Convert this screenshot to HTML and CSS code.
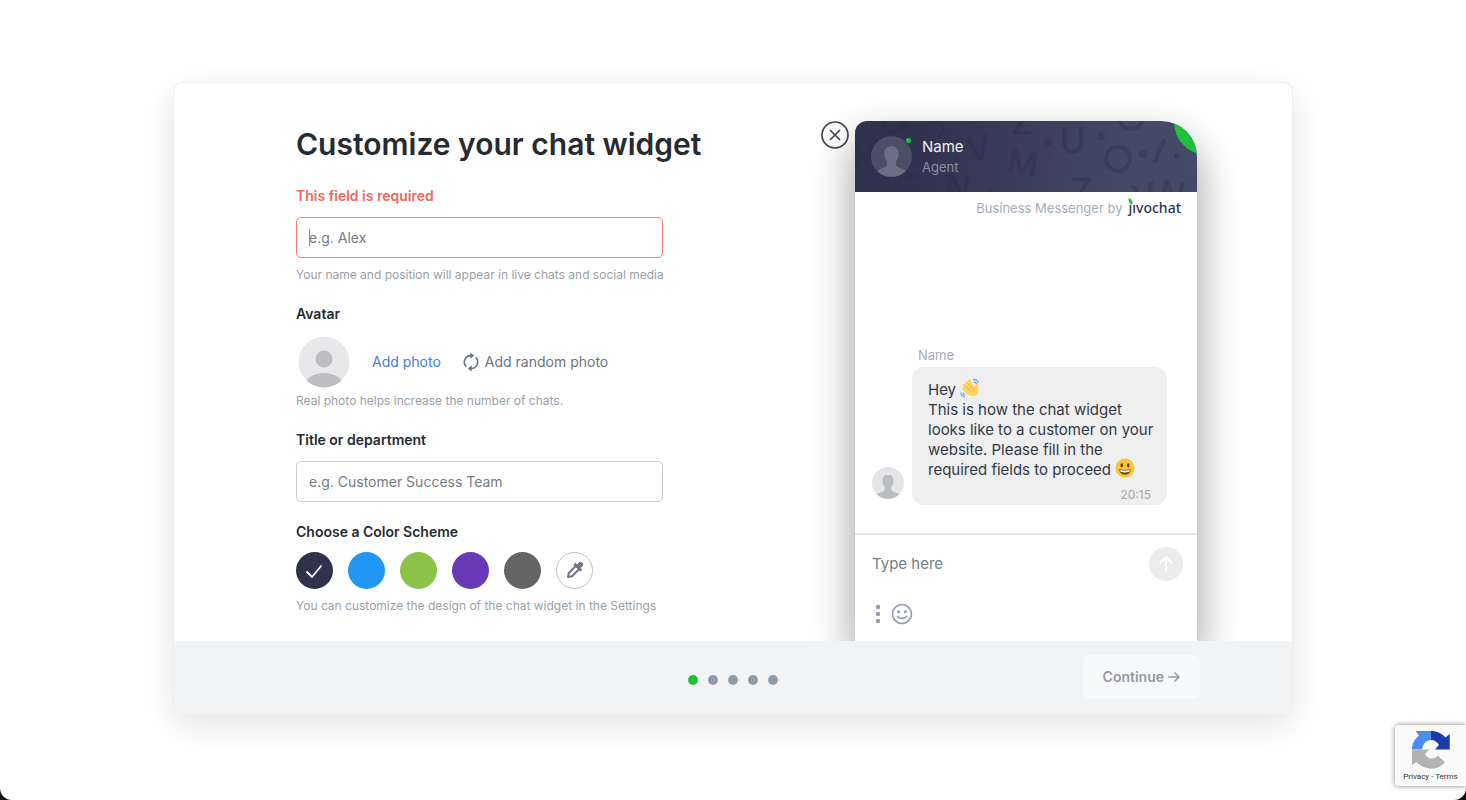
FILE: index.html
```html
<!DOCTYPE html>
<html lang="en">
<head>
    <meta charset="UTF-8">
    <meta name="viewport" content="width=device-width, initial-scale=1.0">
    <title>Customize your chat widget</title>
    <link rel="stylesheet" href="styles.css">
</head>
<body>
    <div class="page">
        <main class="card">
            <div class="card-body">
                <form class="form" id="widget-form">
                    <h1>Customize your chat widget</h1>

                    <div class="field">
                        <label class="label label-error" for="name">This field is required</label>
                        <div class="input-wrap">
                            <input class="input input-error" id="name" type="text" placeholder="e.g. Alex">
                            <span class="caret"></span>
                        </div>
                        <p class="hint">Your name and position will appear in live chats and social media</p>
                    </div>

                    <div class="field">
                        <h2 class="label">Avatar</h2>
                        <div class="avatar-row">
                            <svg class="avatar" viewBox="0 0 52 52" aria-hidden="true">
                                <clipPath id="avatar-clip"><circle cx="26" cy="26" r="25.5"/></clipPath>
                                <g clip-path="url(#avatar-clip)">
                                    <rect width="52" height="52" fill="#e8e8ea"/>
                                    <circle cx="26" cy="23" r="8.5" fill="#bdbec4"/>
                                    <ellipse cx="26" cy="49" rx="18.5" ry="12" fill="#bdbec4"/>
                                </g>
                            </svg>
                            <button class="link-btn link-blue" type="button">Add photo</button>
                            <button class="link-btn" type="button">
                                <svg width="16" height="20" viewBox="0 0 16 20" fill="none" stroke="#6b747d" stroke-width="1.7" aria-hidden="true">
                                    <path d="M3.3 14.7A6.5 6.5 0 0 1 8.6 3.6"/>
                                    <path d="M12.7 5.3A6.5 6.5 0 0 1 7.4 16.4"/>
                                    <path d="M7.3.4 11.2 3.6 7.3 6.8zM8.7 13.2 4.8 16.4l3.9 3.2z" fill="#6b747d" stroke="none"/>
                                </svg>
                                Add random photo
                            </button>
                        </div>
                        <p class="hint hint-close">Real photo helps increase the number of chats.</p>
                    </div>

                    <div class="field">
                        <label class="label" for="title">Title or department</label>
                        <input class="input" id="title" type="text" placeholder="e.g. Customer Success Team">
                    </div>

                    <fieldset class="field">
                        <legend class="label">Choose a Color Scheme</legend>
                        <div class="swatches">
                            <label class="swatch">
                                <input class="navy" type="radio" name="scheme" aria-label="Navy" checked>
                                <svg viewBox="0 0 37 37" fill="none" stroke="#fff" stroke-width="1.8" aria-hidden="true"><path d="M10.5 19.5l5.5 5.5 9.5-11.5"/></svg>
                            </label>
                            <label class="swatch"><input class="blue" type="radio" name="scheme" aria-label="Blue"></label>
                            <label class="swatch"><input class="green" type="radio" name="scheme" aria-label="Green"></label>
                            <label class="swatch"><input class="purple" type="radio" name="scheme" aria-label="Purple"></label>
                            <label class="swatch"><input class="gray" type="radio" name="scheme" aria-label="Gray"></label>
                            <button class="picker" type="button" aria-label="Custom color">
                                <svg width="18" height="18" viewBox="0 0 18 18" aria-hidden="true">
                                    <path d="M10 4.8 2.8 12 2 16 6 15.2 13.2 8" fill="#fff" stroke="#737680" stroke-width="2" stroke-linejoin="round"/>
                                    <path d="M7.8 3.6l1.4-1.3 1.9 1.5 2-2.2a2.4 2.4 0 0 1 3.3 3.3l-2.2 2 1.5 1.9-1.4 1.4z" fill="#737680" stroke="#737680" stroke-linejoin="round"/>
                                </svg>
                            </button>
                        </div>
                        <p class="hint">You can customize the design of the chat widget in the Settings</p>
                    </fieldset>
                </form>

                <section class="preview">
                    <button class="close" type="button" aria-label="Close">
                        <svg width="28" height="28" viewBox="0 0 28 28" fill="none" stroke="#434951" stroke-width="1.7" aria-hidden="true">
                            <circle cx="14" cy="14" r="13"/>
                            <path d="M9 9l10 10M19 9 9 19"/>
                        </svg>
                    </button>
                    <div class="widget">
                        <header class="widget-header">
                            <svg class="pattern" viewBox="0 0 342 71" aria-hidden="true">
                                <circle cx="39" cy="1" r="10"/>
                                <circle cx="263" cy="38" r="12"/>
                                <circle cx="276" cy="-4" r="12"/>
                                <path d="M76 2c12-3 16 6 9 12M300 40l9-20"/>
                                <g class="dots">
                                    <circle cx="193" cy="21" r="4"/>
                                    <circle cx="246" cy="15" r="4"/>
                                    <circle cx="288" cy="33" r="4"/>
                                    <circle cx="101" cy="39" r="3"/>
                                    <circle cx="135" cy="70" r="3"/>
                                    <circle cx="322" cy="35" r="3"/>
                                </g>
                                <g class="letters">
                                    <text x="112" y="39" transform="rotate(-12 125 28)">V</text>
                                    <text x="156" y="13">Z</text>
                                    <text x="152" y="54" transform="rotate(10 168 45)">M</text>
                                    <text x="205" y="32">U</text>
                                    <text x="90" y="78" transform="rotate(8 100 65)">N</text>
                                    <text x="216" y="82">Z</text>
                                    <text x="-4" y="44" transform="rotate(-12 12 35)">M</text>
                                    <text x="48" y="57">L</text>
                                    <text x="278" y="88" transform="rotate(-12 288 76)">V</text>
                                    <text x="304" y="84" transform="rotate(10 310 74)">N</text>
                                </g>
                            </svg>
                            <div class="agent-photo">
                                <svg viewBox="0 0 32 32" aria-hidden="true">
                                    <circle cx="16" cy="16" r="16" fill="#4c4d66"/>
                                    <path d="M16 8c-4 0-6 2.5-5.5 7 .2 2 1 3.5 2 4.5v3c0 2.5-5 2.5-7.5 5A16 16 0 0 0 27 27.5c-2.5-2.5-7.5-2.5-7.5-5v-3c1-1 1.8-2.5 2-4.5.5-4.5-1.5-7-5.500-7z" fill="#6e6f84"/>
                                </svg>
                                <span class="online"></span>
                            </div>
                            <div class="agent">
                                <div class="agent-name">Name</div>
                                <div class="agent-role">Agent</div>
                            </div>
                            <span class="corner"></span>
                        </header>

                        <div class="brand">
                            <span>Business Messenger by</span>
                            <span class="logo">
                                <svg class="leaf" width="5" height="7" viewBox="0 0 5 7" aria-hidden="true"><path d="M.5 0C4 1 5 3.5 4 7 1.5 5.5 0 3.5.5 0z" fill="#1fbf3f"/></svg>
                                ȷıvochat
                            </span>
                        </div>

                        <div class="chat">
                            <svg class="chat-photo" viewBox="0 0 32 32" aria-hidden="true">
                                <circle cx="16" cy="16" r="16" fill="#e5e6e8"/>
                                <path d="M16 8c-4 0-6 2.5-5.5 7 .2 2 1 3.5 2 4.5v3c0 2.5-5 2.5-7.5 5A16 16 0 0 0 27 27.5c-2.5-2.5-7.5-2.5-7.5-5v-3c1-1 1.8-2.5 2-4.5.5-4.5-1.5-7-5.500-7z" fill="#bbbdc3"/>
                            </svg>
                            <div class="message">
                                <div class="message-name">Name</div>
                                <div class="bubble">
                                    <p>Hey
                                        <svg class="emoji" viewBox="0 0 20 20" role="img" aria-label="Waving hand">
                                            <path d="M4.2 7.2 9.5 14M6.2 4.5l6 8M9 3l5 7.5M3.5 10.5l5 5" stroke="#fbd35e" stroke-width="2.8" stroke-linecap="round"/>
                                            <path d="M6 10.5 13.5 7l1.6 1.5c.4-2 .4-3.5 1.6-3.5 1.6 0 1.7 2.5 1.8 5.5.1 4-2 7.5-5.5 7.8-2.8.2-5-2-7-4.8z" fill="#fbd35e"/>
                                            <path d="M5 7l5 6M7.7 5l4.6 6M13 14c0-2 .8-3.3 2.3-3.8" fill="none" stroke="#e3a63c" stroke-width=".7"/>
                                            <path d="M13 1.5c2.5-.3 4.5 1 5.5 3.5M13.5 3.8c1.5 0 2.6.8 3.2 2M1 14.5c0 2.5 1.5 4 4 4.5M3 14.5c.2 1.5 1 2.3 2.5 2.8" fill="none" stroke="#62acd9" stroke-width="1.2"/>
                                        </svg>
                                        <br>This is how the chat widget looks like to a customer on your website. Please fill in the required fields to proceed
                                        <svg class="emoji" viewBox="0 0 20 20" role="img" aria-label="Grinning face">
                                            <circle cx="10" cy="10" r="9.5" fill="#fcc533"/>
                                            <ellipse cx="6.8" cy="7.3" rx="1.3" ry="2.1" fill="#5c4220"/>
                                            <ellipse cx="13.2" cy="7.3" rx="1.3" ry="2.1" fill="#5c4220"/>
                                            <path d="M4.3 11.2c3.6 1 7.8 1 11.4 0 0 3.5-2.5 5.3-5.7 5.3s-5.7-1.8-5.7-5.3z" fill="#5c4220"/>
                                            <path d="M5 12c3.3.8 6.7.8 10 0-.2 1-.6 1.7-1 2.1-2.6.6-5.4.6-8 0-.4-.4-.8-1.1-1-2.1z" fill="#fff"/>
                                        </svg>
                                    </p>
                                    <time>20:15</time>
                                </div>
                            </div>
                        </div>

                        <div class="composer">
                            <div class="composer-row">
                                <input class="composer-input" type="text" placeholder="Type here" aria-label="Message">
                                <button class="send" type="button" aria-label="Send">
                                    <svg width="16" height="18" viewBox="0 0 16 18" fill="none" stroke="#fff" stroke-width="2" stroke-linecap="round" stroke-linejoin="round" aria-hidden="true"><path d="M8 16V2M2.5 7.5 8 2l5.5 5.5"/></svg>
                                </button>
                            </div>
                            <div class="tools">
                                <button type="button" aria-label="Menu">
                                    <svg width="6" height="20" viewBox="0 0 6 20" fill="#969cab" aria-hidden="true"><circle cx="3" cy="3" r="2.2"/><circle cx="3" cy="10" r="2.2"/><circle cx="3" cy="17" r="2.2"/></svg>
                                </button>
                                <button type="button" aria-label="Emoji">
                                    <svg width="22" height="22" viewBox="0 0 22 22" fill="none" stroke="#969cab" stroke-width="1.7" stroke-linecap="round" aria-hidden="true">
                                        <circle cx="11" cy="11" r="9.5"/>
                                        <path d="M6.6 13.4c2 2.7 6.8 2.7 8.8 0"/>
                                        <circle cx="7.6" cy="8.8" r="1.5" fill="#969cab" stroke="none"/>
                                        <circle cx="14.4" cy="8.8" r="1.5" fill="#969cab" stroke="none"/>
                                    </svg>
                                </button>
                            </div>
                        </div>
                    </div>
                </section>
            </div>

            <footer class="card-footer">
                <ol class="steps" aria-label="Progress">
                    <li class="active"></li>
                    <li></li>
                    <li></li>
                    <li></li>
                    <li></li>
                </ol>
                <button class="continue" type="submit" form="widget-form">
                    Continue
                    <svg width="12" height="12" viewBox="0 0 12 12" fill="none" stroke="#959ba2" stroke-width="1.7" stroke-linecap="round" stroke-linejoin="round" aria-hidden="true"><path d="M1 6h10M7 2l4 4-4 4"/></svg>
                </button>
            </footer>
        </main>

        <aside class="recaptcha">
            <svg width="38" height="38" viewBox="0 0 38 38" aria-hidden="true">
                <path d="M19 0C25 0 30 2.5 33.5 6.5L37.7 3v15.5H23L27 14c-1.5-3-4.5-5-8-5z" fill="#1c3aa9"/>
                <path d="M19 0H3.5L7 4.5C2.5 8 0 13 0 18.5h10C10.5 14 13 9.5 19 9z" fill="#4a8df0"/>
                <path d="M0 18.5V34l4.5-3A19 19 0 0 0 33 31.5l-7-7c-4 4.5-10 4-13-1.5l4.5-4.5z" fill="#b2b3b5"/>
            </svg>
            <div class="recaptcha-links"><a href="#">Privacy</a> - <a href="#">Terms</a></div>
        </aside>
    </div>
</body>
</html>
```
FILE: styles.css
```css
* {
    box-sizing: border-box;
}
body {
    margin: 0;
    background-color: #111;
    color: #262b31;
    font-family: Inter, sans-serif;
    font-size: 14px;
    line-height: 20px;
}
h1, h2, p, ol, fieldset, legend {
    margin: 0;
    padding: 0;
    border: 0;
}
button, input {
    font: inherit;
    color: inherit;
}
button {
    padding: 0;
    border: none;
    background: none;
    cursor: pointer;
}
svg {
    display: block;
}
.page {
    position: relative;
    display: flex;
    align-items: center;
    justify-content: center;
    min-height: 100vh;
    padding: 0 24px 4px;
    background-color: #fff;
    border-radius: 0 0 12px 12px;
}
.card {
    width: 100%;
    max-width: 1120px;
    overflow: hidden;
    border: 1px solid #eee;
    border-radius: 10px;
    background-color: #fff;
    box-shadow: 0 10px 34px rgba(0,0,0,0.11);
}
.card-body {
    display: flex;
    justify-content: space-between;
    gap: 40px;
    padding: 38px 95px 0 122px;
    overflow: hidden;
}

/* Form */
.form {
    flex: 0 1 420px;
    padding-bottom: 6px;
}
h1 {
    margin: 3px 0 22px;
    font-size: 30px;
    line-height: 40px;
    font-weight: 600;
    white-space: nowrap;
}
.field {
    margin-bottom: 20px;
}
.label {
    display: block;
    margin-bottom: 11px;
    font-size: 14px;
    font-weight: 600;
    line-height: 20px;
}
legend.label {
    margin-bottom: 10px;
}
.label-error {
    color: #f0675c;
}
.input-wrap {
    position: relative;
}
.input {
    display: block;
    width: 100%;
    max-width: 367px;
    height: 41px;
    padding: 0 12px;
    border: 1px solid #c9ced3;
    border-radius: 5px;
    background-color: #fff;
}
.input-error {
    border-color: #f37b72;
}
.input::placeholder {
    color: #757b84;
    opacity: 1;
}
.caret {
    position: absolute;
    top: 12px;
    left: 13px;
    width: 1px;
    height: 17px;
    background-color: #f0675c;
}
.hint {
    margin-top: 8px;
    color: #9a9fa6;
    font-size: 12px;
    line-height: 18px;
    white-space: nowrap;
}
.hint-close {
    margin-top: 4px;
}
.avatar-row {
    display: flex;
    align-items: center;
    margin-top: 12px;
    padding-left: 2px;
}
.avatar {
    width: 52px;
    height: 52px;
}
.link-btn {
    display: flex;
    align-items: center;
    gap: 6px;
    margin-left: 22px;
    color: #6b747d;
}
.link-blue {
    color: #3f80e0;
}
.swatches {
    display: flex;
    gap: 15px;
}
.swatch {
    position: relative;
    width: 37px;
    height: 37px;
}
.swatch input {
    display: block;
    width: 100%;
    height: 100%;
    margin: 0;
    border-radius: 50%;
    appearance: none;
    cursor: pointer;
}
.swatch svg {
    position: absolute;
    inset: 0;
}
.navy {
    background-color: #30324c;
}
.blue {
    background-color: #2196f3;
}
.green {
    background-color: #8bc34a;
}
.purple {
    background-color: #673ab7;
}
.gray {
    background-color: #656565;
}
.picker {
    display: flex;
    align-items: center;
    justify-content: center;
    width: 37px;
    height: 37px;
    border: 1px solid #bfc1c7;
    border-radius: 50%;
}

/* Widget preview */
.preview {
    display: flex;
    align-items: flex-start;
    gap: 6px;
}
.widget {
    display: flex;
    flex-direction: column;
    width: 342px;
    height: 100%;
    border-radius: 12px 36px 0 0;
    background-color: #fff;
    box-shadow: 0 20px 44px rgba(0,0,0,0.4);
}
.widget-header {
    position: relative;
    display: flex;
    align-items: center;
    gap: 10px;
    height: 71px;
    padding-left: 16px;
    overflow: hidden;
    border-radius: 12px 36px 0 0;
    background: linear-gradient(100deg, #30324f 15%, #444a68 80%);
}
.pattern {
    position: absolute;
    inset: 0;
    width: 100%;
    height: 100%;
    fill: none;
    stroke: #292b47;
    stroke-width: 4;
    stroke-linecap: round;
    opacity: 0.35;
}
.pattern .dots {
    fill: #292b47;
    stroke: none;
}
.pattern .letters {
    fill: #292b47;
    stroke-width: 1;
    stroke-linejoin: round;
    font-size: 34px;
}
.agent-photo {
    position: relative;
    width: 41px;
    height: 41px;
}
.online {
    position: absolute;
    top: 1px;
    right: 0;
    width: 7px;
    height: 7px;
    border: 1px solid #30324f;
    border-radius: 50%;
    background-color: #1fbf3f;
}
.agent {
    position: relative;
    padding-top: 2px;
    line-height: 21px;
}
.agent-name {
    color: #f1f1f5;
    font-size: 15px;
}
.agent-role {
    color: #8c8ea3;
    font-size: 13px;
}
.corner {
    position: absolute;
    top: -32px;
    right: -43px;
    width: 66px;
    height: 66px;
    border-radius: 50%;
    background-color: #1ec138;
}
.brand {
    display: flex;
    justify-content: flex-end;
    gap: 6px;
    margin-top: 6px;
    padding-right: 16px;
    color: #a3adba;
    font-size: 13px;
}
.logo {
    position: relative;
    color: #30324c;
    font-family: "Noto Sans", sans-serif;
    font-size: 14px;
    font-weight: 500;
}
.leaf {
    position: absolute;
    top: 0;
    left: 0;
}
.chat {
    display: flex;
    align-items: flex-end;
    gap: 8px;
    margin-top: auto;
    padding: 0 30px 28px 17px;
}
.chat-photo {
    flex: none;
    width: 32px;
    height: 32px;
    margin-bottom: 6px;
}
.message {
    flex: 1;
}
.message-name {
    margin: 0 0 2px 6px;
    color: #a3adba;
    font-size: 13px;
}
.bubble {
    padding: 13px 16px 1px;
    border-radius: 12px;
    background-color: #efefef;
    color: #2f3a46;
}
.bubble p {
    margin-right: -8px;
    font-size: 15px;
}
.bubble time {
    display: block;
    margin-top: 6px;
    color: #a5a7a9;
    font-size: 12px;
    line-height: 18px;
    text-align: right;
}
.emoji {
    display: inline-block;
    width: 20px;
    height: 20px;
    margin-top: -4px;
    vertical-align: middle;
}
.composer {
    padding: 12px 14px 16px 17px;
    border-top: 2px solid #e4e4e5;
}
.composer-row {
    display: flex;
    align-items: center;
    justify-content: space-between;
}
.composer-input {
    flex: 1;
    min-width: 0;
    padding: 0;
    border: none;
    background: none;
    font-size: 15px;
}
.composer-input::placeholder {
    color: #727e8b;
    opacity: 1;
}
.send {
    display: flex;
    align-items: center;
    justify-content: center;
    width: 34px;
    height: 34px;
    border-radius: 50%;
    background-color: #ececec;
}
.tools {
    display: flex;
    align-items: center;
    gap: 10px;
    margin-top: 22px;
    padding-left: 3px;
}

/* Footer */
.card-footer {
    display: grid;
    grid-template-columns: 1fr auto 1fr;
    align-items: center;
    padding: 14px 92px 15px;
    background-color: #f1f3f5;
}
.steps {
    display: flex;
    grid-column: 2;
    gap: 10px;
    margin-top: 6px;
    list-style: none;
}
.steps li {
    width: 10px;
    height: 10px;
    border-radius: 50%;
    background-color: #919ca7;
}
.steps .active {
    background-color: #1ec138;
}
.continue {
    display: flex;
    align-items: center;
    justify-content: center;
    justify-self: end;
    gap: 4px;
    height: 44px;
    padding: 0 20px;
    border-radius: 6px;
    background-color: #f7f9fb;
    color: #959ba2;
    font-weight: 600;
}

/* reCAPTCHA badge */
.recaptcha {
    position: absolute;
    right: 0;
    bottom: 14px;
    display: flex;
    flex-direction: column;
    align-items: center;
    width: 71px;
    padding: 6px 0 2px;
    border-radius: 3px 0 0 3px;
    background-color: #fafafa;
    box-shadow: 0 0 5px rgba(0,0,0,0.5);
}
.recaptcha-links {
    color: #333;
    font-family: Roboto, sans-serif;
    font-size: 8px;
    line-height: 15px;
}
.recaptcha-links a {
    color: inherit;
    text-decoration: none;
}
```
